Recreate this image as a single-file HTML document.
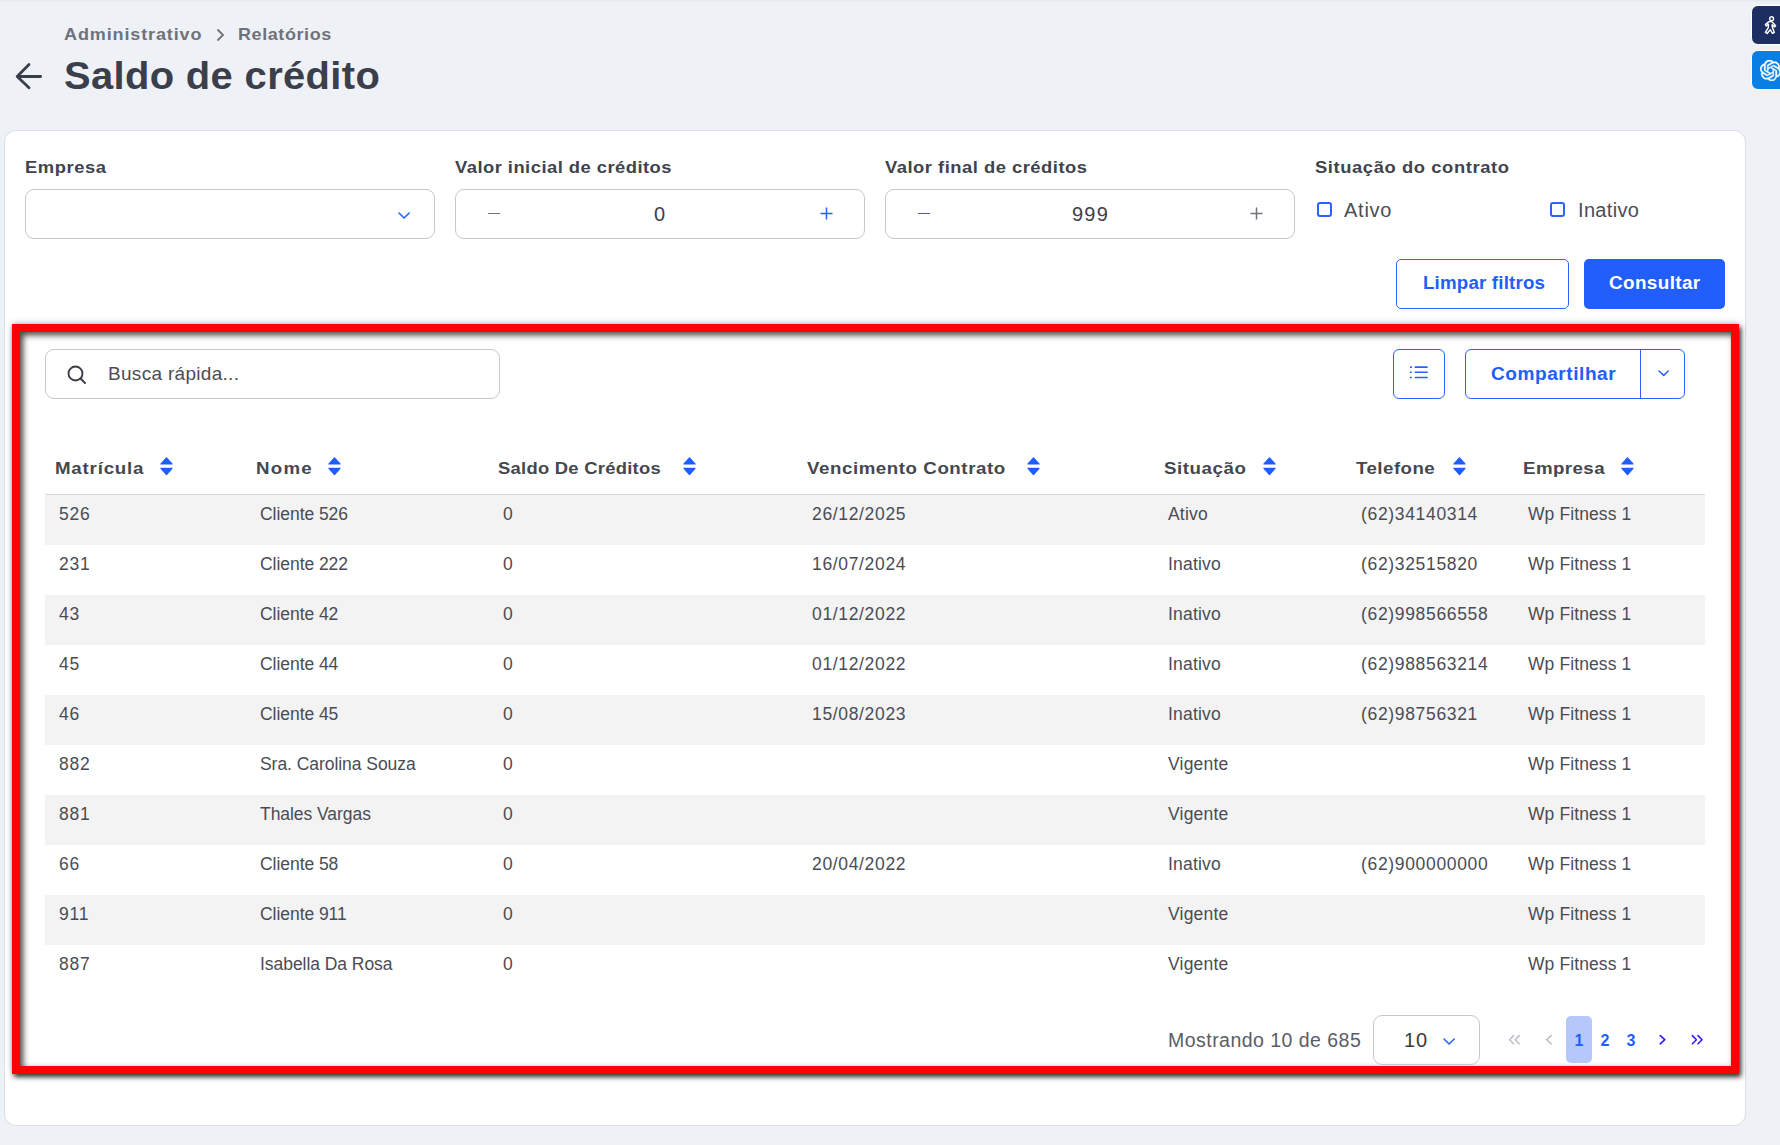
<!DOCTYPE html>
<html><head><meta charset="utf-8">
<style>
*{box-sizing:border-box;margin:0;padding:0}
html,body{width:1780px;height:1145px;overflow:hidden;background:#eef1f6;font-family:"Liberation Sans",sans-serif;color:#3e414d}
body{position:relative}
.abs{position:absolute;transform-origin:0 0;white-space:nowrap}
.topshade{left:0;top:0;width:1780px;height:3px;background:linear-gradient(#e4e7ec,#eef1f6)}
.crumb{font-size:17px;color:#6f7279;font-weight:bold;line-height:20px}
.title{font-size:38px;font-weight:bold;color:#3b3f4c;line-height:42px}
.card{left:4px;top:130px;width:1742px;height:996px;background:#fff;border:1px solid #dcdee3;border-radius:12px}
.lbl{font-size:17px;line-height:20px;font-weight:bold;color:#40434d}
.inp{top:189px;width:410px;height:50px;border:1px solid #c6c8cd;border-radius:9px;background:#fff}
.btn{font-size:18px;font-weight:bold;line-height:22px}
.red{left:12px;top:324px;width:1727px;height:750px;border:8px solid #ff0000;box-shadow:2px 3px 5px rgba(0,0,0,.8), 0 -1px 6px rgba(0,0,0,.22), inset 3px 3px 6px rgba(0,0,0,.75)}
.num{font-size:20px;line-height:22px;color:#3b3e48}
.ck{top:202px;width:15px;height:15px;border:2px solid #2a63f6;border-radius:3px}
.ckl{font-size:20px;line-height:24px;color:#4a4d57}
.search{left:45px;top:349px;width:455px;height:50px;border:1px solid #c6c8cd;border-radius:9px}
.ph{font-size:19px;line-height:22px;color:#4a4c55}
.obtn{border:1px solid #2a63f6;border-radius:6px;background:#fff}
.th{font-size:17px;line-height:20px;font-weight:bold;color:#45474f}
.sort{top:456.5px}
.hline{left:45px;top:494px;width:1660px;height:1px;background:#d8d9de}
.row{left:45px;width:1660px;height:50px;background:#fff}
.row.odd{background:#f3f3f3}
.td{position:absolute;top:9px;font-size:17.5px;line-height:20px;color:#4a4c55;white-space:nowrap;letter-spacing:0.35px}
.pg{font-size:19.5px;line-height:22px}
</style></head>
<body>
<div class="abs topshade"></div>
<div class="abs crumb" style="left:64px;top:25px;letter-spacing:0.82px;transform:scaleX(1.06);">Administrativo</div>
<svg class="abs" style="left:216px;top:28px" width="9" height="14" viewBox="0 0 9 14"><path d="M1.5 1.5L7 7L1.5 12.5" fill="none" stroke="#6f7279" stroke-width="1.8"/></svg>
<div class="abs crumb" style="left:238px;top:25px;letter-spacing:0.54px;transform:scaleX(1.06);">Relatórios</div>
<svg class="abs" style="left:0;top:56px" width="50" height="40" viewBox="0 0 50 40"><path d="M40.6 20.5H17.5M29 8.6L17.2 20.5L29 31.8" fill="none" stroke="#3a3e4b" stroke-width="2.8" stroke-linecap="round" stroke-linejoin="round"/></svg>
<div class="abs title" style="left:64px;top:55px;letter-spacing:0.34px;transform:scaleX(1.05);">Saldo de crédito</div>

<div class="abs card"></div>
<div class="abs lbl" style="left:25px;top:158px;letter-spacing:0.54px;transform:scaleX(1.08);">Empresa</div>
<div class="abs lbl" style="left:455px;top:158px;letter-spacing:0.44px;transform:scaleX(1.08);">Valor inicial de créditos</div>
<div class="abs lbl" style="left:885px;top:158px;letter-spacing:0.47px;transform:scaleX(1.08);">Valor final de créditos</div>
<div class="abs lbl" style="left:1315px;top:158px;letter-spacing:0.55px;transform:scaleX(1.08);">Situação do contrato</div>

<div class="abs inp" style="left:25px"></div>
<svg class="abs" style="left:396.4px;top:210.1px" width="16.2" height="11.0" viewBox="0 0 16.2 11.0"><path d="M3 3L8.10 8.00L13.20 3" fill="none" stroke="#2563f7" stroke-width="1.6" stroke-linecap="round" stroke-linejoin="round"/></svg>

<div class="abs inp" style="left:455px"></div>
<div class="abs" style="left:488px;top:212.5px;width:12px;height:1.3px;background:#70737b"></div>
<div class="abs num" style="left:654px;top:203px;">0</div>
<svg class="abs" style="left:820px;top:207px" width="13" height="13" viewBox="0 0 13 13"><path d="M6.5 0.5V12.5M0.5 6.5H12.5" fill="none" stroke="#2563f7" stroke-width="1.5"/></svg>

<div class="abs inp" style="left:885px"></div>
<div class="abs" style="left:918px;top:212.5px;width:12px;height:1.3px;background:#2563f7"></div>
<div class="abs num" style="left:1072px;top:203px;letter-spacing:1.2px;">999</div>
<svg class="abs" style="left:1250px;top:207px" width="13" height="13" viewBox="0 0 13 13"><path d="M6.5 0.5V12.5M0.5 6.5H12.5" fill="none" stroke="#70737b" stroke-width="1.5"/></svg>

<div class="abs ck" style="left:1317px"></div>
<div class="abs ckl" style="left:1344px;top:198px;letter-spacing:0.75px;">Ativo</div>
<div class="abs ck" style="left:1550px"></div>
<div class="abs ckl" style="left:1578px;top:198px;letter-spacing:0.33px;">Inativo</div>

<div class="abs" style="left:1396px;top:259px;width:173px;height:50px;border:1px solid #2a63f6;border-radius:5px;background:#fff"></div>
<div class="abs btn" style="left:1423px;top:272px;letter-spacing:0.17px;transform:scaleX(1.04);color:#215efa">Limpar filtros</div>
<div class="abs" style="left:1584px;top:259px;width:141px;height:50px;border-radius:5px;background:#215efa"></div>
<div class="abs btn" style="left:1609px;top:272px;letter-spacing:0.36px;transform:scaleX(1.05);color:#fff">Consultar</div>

<div class="abs red"></div>

<div class="abs search"></div>
<svg class="abs" style="left:67px;top:365px" width="20" height="19" viewBox="0 0 20 19"><circle cx="8.5" cy="8.5" r="7" fill="none" stroke="#3b3e48" stroke-width="1.9"/><path d="M13.5 13.5L18 18" stroke="#3b3e48" stroke-width="1.9" stroke-linecap="round"/></svg>
<div class="abs ph" style="left:108px;top:363px;letter-spacing:0.3px;">Busca rápida...</div>

<div class="abs obtn" style="left:1393px;top:349px;width:52px;height:50px"></div>
<svg class="abs" style="left:1410px;top:365px" width="19" height="14" viewBox="0 0 19 14"><g fill="#2563f7"><rect x="0" y="1.3" width="2" height="1.6" rx="0.5"/><rect x="0" y="6.5" width="2" height="1.6" rx="0.5"/><rect x="0" y="11.7" width="2" height="1.6" rx="0.5"/><rect x="4.6" y="1.3" width="13.2" height="1.6" rx="0.6"/><rect x="4.6" y="6.5" width="13.2" height="1.6" rx="0.6"/><rect x="4.6" y="11.7" width="13.2" height="1.6" rx="0.6"/></g></svg>
<div class="abs obtn" style="left:1465px;top:349px;width:220px;height:50px"></div>
<div class="abs" style="left:1640px;top:349px;width:1px;height:50px;background:#2a63f6"></div>
<div class="abs btn" style="left:1491px;top:362.5px;letter-spacing:0.51px;transform:scaleX(1.06);color:#215efa">Compartilhar</div>
<svg class="abs" style="left:1655.5px;top:368.4px" width="15.3" height="10.4" viewBox="0 0 15.3 10.4"><path d="M3 3L7.70 7.40L12.30 3" fill="none" stroke="#2563f7" stroke-width="1.5" stroke-linecap="round" stroke-linejoin="round"/></svg>

<div class="abs th" style="left:55px;top:459px;letter-spacing:0.72px;transform:scaleX(1.1);">Matrícula</div><svg class="abs sort" style="left:160px" width="13" height="19" viewBox="0 0 13 19"><path d="M6.5 1.0L12 6.9H1Z M1 11.3H12L6.5 17.6Z" fill="#1f5dfc" stroke="#1f5dfc" stroke-width="1.3" stroke-linejoin="round"/></svg>
<div class="abs th" style="left:256px;top:459px;letter-spacing:1.12px;transform:scaleX(1.1);">Nome</div><svg class="abs sort" style="left:328px" width="13" height="19" viewBox="0 0 13 19"><path d="M6.5 1.0L12 6.9H1Z M1 11.3H12L6.5 17.6Z" fill="#1f5dfc" stroke="#1f5dfc" stroke-width="1.3" stroke-linejoin="round"/></svg>
<div class="abs th" style="left:498px;top:459px;letter-spacing:0.26px;transform:scaleX(1.08);">Saldo De Créditos</div><svg class="abs sort" style="left:683px" width="13" height="19" viewBox="0 0 13 19"><path d="M6.5 1.0L12 6.9H1Z M1 11.3H12L6.5 17.6Z" fill="#1f5dfc" stroke="#1f5dfc" stroke-width="1.3" stroke-linejoin="round"/></svg>
<div class="abs th" style="left:807px;top:459px;letter-spacing:0.51px;transform:scaleX(1.1);">Vencimento Contrato</div><svg class="abs sort" style="left:1027px" width="13" height="19" viewBox="0 0 13 19"><path d="M6.5 1.0L12 6.9H1Z M1 11.3H12L6.5 17.6Z" fill="#1f5dfc" stroke="#1f5dfc" stroke-width="1.3" stroke-linejoin="round"/></svg>
<div class="abs th" style="left:1164px;top:459px;letter-spacing:0.52px;transform:scaleX(1.1);">Situação</div><svg class="abs sort" style="left:1263px" width="13" height="19" viewBox="0 0 13 19"><path d="M6.5 1.0L12 6.9H1Z M1 11.3H12L6.5 17.6Z" fill="#1f5dfc" stroke="#1f5dfc" stroke-width="1.3" stroke-linejoin="round"/></svg>
<div class="abs th" style="left:1356px;top:459px;letter-spacing:0.42px;transform:scaleX(1.1);">Telefone</div><svg class="abs sort" style="left:1453px" width="13" height="19" viewBox="0 0 13 19"><path d="M6.5 1.0L12 6.9H1Z M1 11.3H12L6.5 17.6Z" fill="#1f5dfc" stroke="#1f5dfc" stroke-width="1.3" stroke-linejoin="round"/></svg>
<div class="abs th" style="left:1523px;top:459px;letter-spacing:0.39px;transform:scaleX(1.1);">Empresa</div><svg class="abs sort" style="left:1621px" width="13" height="19" viewBox="0 0 13 19"><path d="M6.5 1.0L12 6.9H1Z M1 11.3H12L6.5 17.6Z" fill="#1f5dfc" stroke="#1f5dfc" stroke-width="1.3" stroke-linejoin="round"/></svg>
<div class="abs hline"></div>
<div class="abs row odd" style="top:495px"><span class="td" style="left:14px;letter-spacing:0.8px">526</span><span class="td" style="left:215px;letter-spacing:-0.05px">Cliente 526</span><span class="td" style="left:458px;letter-spacing:0px">0</span><span class="td" style="left:767px;letter-spacing:0.66px">26/12/2025</span><span class="td" style="left:1123px;letter-spacing:0.2px">Ativo</span><span class="td" style="left:1316px;letter-spacing:0.67px">(62)34140314</span><span class="td" style="left:1483px;letter-spacing:0.1px">Wp Fitness 1</span></div>
<div class="abs row" style="top:545px"><span class="td" style="left:14px;letter-spacing:0.8px">231</span><span class="td" style="left:215px;letter-spacing:-0.05px">Cliente 222</span><span class="td" style="left:458px;letter-spacing:0px">0</span><span class="td" style="left:767px;letter-spacing:0.66px">16/07/2024</span><span class="td" style="left:1123px;letter-spacing:0.2px">Inativo</span><span class="td" style="left:1316px;letter-spacing:0.67px">(62)32515820</span><span class="td" style="left:1483px;letter-spacing:0.1px">Wp Fitness 1</span></div>
<div class="abs row odd" style="top:595px"><span class="td" style="left:14px;letter-spacing:0.8px">43</span><span class="td" style="left:215px;letter-spacing:-0.05px">Cliente 42</span><span class="td" style="left:458px;letter-spacing:0px">0</span><span class="td" style="left:767px;letter-spacing:0.66px">01/12/2022</span><span class="td" style="left:1123px;letter-spacing:0.2px">Inativo</span><span class="td" style="left:1316px;letter-spacing:0.67px">(62)998566558</span><span class="td" style="left:1483px;letter-spacing:0.1px">Wp Fitness 1</span></div>
<div class="abs row" style="top:645px"><span class="td" style="left:14px;letter-spacing:0.8px">45</span><span class="td" style="left:215px;letter-spacing:-0.05px">Cliente 44</span><span class="td" style="left:458px;letter-spacing:0px">0</span><span class="td" style="left:767px;letter-spacing:0.66px">01/12/2022</span><span class="td" style="left:1123px;letter-spacing:0.2px">Inativo</span><span class="td" style="left:1316px;letter-spacing:0.67px">(62)988563214</span><span class="td" style="left:1483px;letter-spacing:0.1px">Wp Fitness 1</span></div>
<div class="abs row odd" style="top:695px"><span class="td" style="left:14px;letter-spacing:0.8px">46</span><span class="td" style="left:215px;letter-spacing:-0.05px">Cliente 45</span><span class="td" style="left:458px;letter-spacing:0px">0</span><span class="td" style="left:767px;letter-spacing:0.66px">15/08/2023</span><span class="td" style="left:1123px;letter-spacing:0.2px">Inativo</span><span class="td" style="left:1316px;letter-spacing:0.67px">(62)98756321</span><span class="td" style="left:1483px;letter-spacing:0.1px">Wp Fitness 1</span></div>
<div class="abs row" style="top:745px"><span class="td" style="left:14px;letter-spacing:0.8px">882</span><span class="td" style="left:215px;letter-spacing:-0.05px">Sra. Carolina Souza</span><span class="td" style="left:458px;letter-spacing:0px">0</span><span class="td" style="left:1123px;letter-spacing:0.2px">Vigente</span><span class="td" style="left:1483px;letter-spacing:0.1px">Wp Fitness 1</span></div>
<div class="abs row odd" style="top:795px"><span class="td" style="left:14px;letter-spacing:0.8px">881</span><span class="td" style="left:215px;letter-spacing:-0.05px">Thales Vargas</span><span class="td" style="left:458px;letter-spacing:0px">0</span><span class="td" style="left:1123px;letter-spacing:0.2px">Vigente</span><span class="td" style="left:1483px;letter-spacing:0.1px">Wp Fitness 1</span></div>
<div class="abs row" style="top:845px"><span class="td" style="left:14px;letter-spacing:0.8px">66</span><span class="td" style="left:215px;letter-spacing:-0.05px">Cliente 58</span><span class="td" style="left:458px;letter-spacing:0px">0</span><span class="td" style="left:767px;letter-spacing:0.66px">20/04/2022</span><span class="td" style="left:1123px;letter-spacing:0.2px">Inativo</span><span class="td" style="left:1316px;letter-spacing:0.67px">(62)900000000</span><span class="td" style="left:1483px;letter-spacing:0.1px">Wp Fitness 1</span></div>
<div class="abs row odd" style="top:895px"><span class="td" style="left:14px;letter-spacing:0.8px">911</span><span class="td" style="left:215px;letter-spacing:-0.05px">Cliente 911</span><span class="td" style="left:458px;letter-spacing:0px">0</span><span class="td" style="left:1123px;letter-spacing:0.2px">Vigente</span><span class="td" style="left:1483px;letter-spacing:0.1px">Wp Fitness 1</span></div>
<div class="abs row" style="top:945px"><span class="td" style="left:14px;letter-spacing:0.8px">887</span><span class="td" style="left:215px;letter-spacing:-0.05px">Isabella Da Rosa</span><span class="td" style="left:458px;letter-spacing:0px">0</span><span class="td" style="left:1123px;letter-spacing:0.2px">Vigente</span><span class="td" style="left:1483px;letter-spacing:0.1px">Wp Fitness 1</span></div>

<div class="abs pg" style="left:1168px;top:1029px;letter-spacing:0.47px;color:#5a5d66">Mostrando 10 de 685</div>
<div class="abs" style="left:1373px;top:1015px;width:107px;height:50px;border:1px solid #c6c8cd;border-radius:9px"></div>
<div class="abs pg" style="left:1404px;top:1029px;letter-spacing:1.0px;color:#3a3b40;font-size:20px">10</div>
<svg class="abs" style="left:1441.4px;top:1036.1px" width="16.2" height="11.0" viewBox="0 0 16.2 11.0"><path d="M3 3L8.10 8.00L13.20 3" fill="none" stroke="#2563f7" stroke-width="1.6" stroke-linecap="round" stroke-linejoin="round"/></svg>

<svg class="abs" style="left:1500px;top:1030px" width="210" height="20" viewBox="0 0 210 20">
<g fill="none" stroke-width="1.6" stroke-linecap="round" stroke-linejoin="round">
<path d="M13.6 5.6L9.6 9.7L13.6 13.8M19.2 5.6L15.2 9.7L19.2 13.8" stroke="#bcc0c8"/>
<path d="M51.2 5.6L46.6 9.7L51.2 13.8" stroke="#bcc0c8"/>
<path d="M160.2 5.6L164.8 9.7L160.2 13.8" stroke="#2b1cff"/>
<path d="M192.4 5.6L196.4 9.7L192.4 13.8M198 5.6L202 9.7L198 13.8" stroke="#2b1cff"/>
</g></svg>
<div class="abs" style="left:1566px;top:1016px;width:26px;height:47px;background:#b5c8f9;border-radius:5px"></div>
<div class="abs pg" style="left:1574.5px;top:1030px;font-size:16px;font-weight:bold;color:#215efa">1</div>
<div class="abs pg" style="left:1600.5px;top:1030px;font-size:16px;font-weight:bold;color:#215efa">2</div>
<div class="abs pg" style="left:1626.5px;top:1030px;font-size:16px;font-weight:bold;color:#215efa">3</div>

<div class="abs" style="left:1751px;top:5px;width:40px;height:40px;background:#1d2f60;border:1px solid #fff;border-radius:7px"></div>
<svg class="abs" style="left:1755px;top:10px" width="25" height="30" viewBox="0 0 25 30"><g fill="#1d2f60" stroke="#fff" stroke-width="1.4" stroke-linecap="round" stroke-linejoin="round"><circle cx="16.6" cy="8.7" r="1.9"/><path d="M13.6 11.9L10.4 14.6L11.3 16L13.4 14.3L13.3 17.6L10.4 22.3L12.2 23.5L15.2 19.7L17.4 23.3L19.3 22.6L17.3 17.1L17.1 14.8L19.6 16.9L20.6 15.8L17.9 12.8L16.4 11.4Z"/></g></svg>
<div class="abs" style="left:1751px;top:50px;width:40px;height:40px;background:#0880e3;border:1px solid #fff;border-radius:7px"></div>
<svg class="abs" style="left:1759.5px;top:59.5px" width="21" height="21" viewBox="0 0 24 24"><path fill="#fff" stroke="#fff" stroke-width="0.5" d="M22.2819 9.8211a5.9847 5.9847 0 0 0-.5157-4.9108 6.0462 6.0462 0 0 0-6.5098-2.9A6.0651 6.0651 0 0 0 4.9807 4.1818a5.9847 5.9847 0 0 0-3.9977 2.9 6.0462 6.0462 0 0 0 .7427 7.0966 5.98 5.98 0 0 0 .511 4.9107 6.051 6.051 0 0 0 6.5146 2.9001A5.9847 5.9847 0 0 0 13.2599 24a6.0557 6.0557 0 0 0 5.7718-4.2058 5.9894 5.9894 0 0 0 3.9977-2.9001 6.0557 6.0557 0 0 0-.7475-7.0729zm-9.022 12.6081a4.4755 4.4755 0 0 1-2.8764-1.0408l.1419-.0804 4.7783-2.7582a.7948.7948 0 0 0 .3927-.6813v-6.7369l2.02 1.1686a.071.071 0 0 1 .038.052v5.5826a4.504 4.504 0 0 1-4.4945 4.4944zm-9.6607-4.1254a4.4708 4.4708 0 0 1-.5346-3.0137l.142.0852 4.783 2.7582a.7712.7712 0 0 0 .7806 0l5.8428-3.3685v2.3324a.0804.0804 0 0 1-.0332.0615L9.74 19.9502a4.4992 4.4992 0 0 1-6.1408-1.6464zM2.3408 7.8956a4.485 4.485 0 0 1 2.3655-1.9728V11.6a.7664.7664 0 0 0 .3879.6765l5.8144 3.3543-2.0201 1.1685a.0757.0757 0 0 1-.071 0l-4.8303-2.7865A4.504 4.504 0 0 1 2.3408 7.872zm16.5963 3.8558L13.1038 8.364 15.1192 7.2a.0757.0757 0 0 1 .071 0l4.8303 2.7913a4.4944 4.4944 0 0 1-.6765 8.1042v-5.6772a.79.79 0 0 0-.407-.667zm2.0107-3.0231l-.142-.0852-4.7735-2.7818a.7759.7759 0 0 0-.7854 0L9.409 9.2297V6.8974a.0662.0662 0 0 1 .0284-.0615l4.8303-2.7866a4.4992 4.4992 0 0 1 6.6802 4.66zM8.3065 12.863l-2.02-1.1638a.0804.0804 0 0 1-.038-.0567V6.0742a4.4992 4.4992 0 0 1 7.3757-3.4537l-.142.0805L8.704 5.459a.7948.7948 0 0 0-.3927.6813zm1.0976-2.3654l2.602-1.4998 2.6069 1.4998v2.9994l-2.5974 1.4997-2.6067-1.4997Z"/></svg>
</body></html>
